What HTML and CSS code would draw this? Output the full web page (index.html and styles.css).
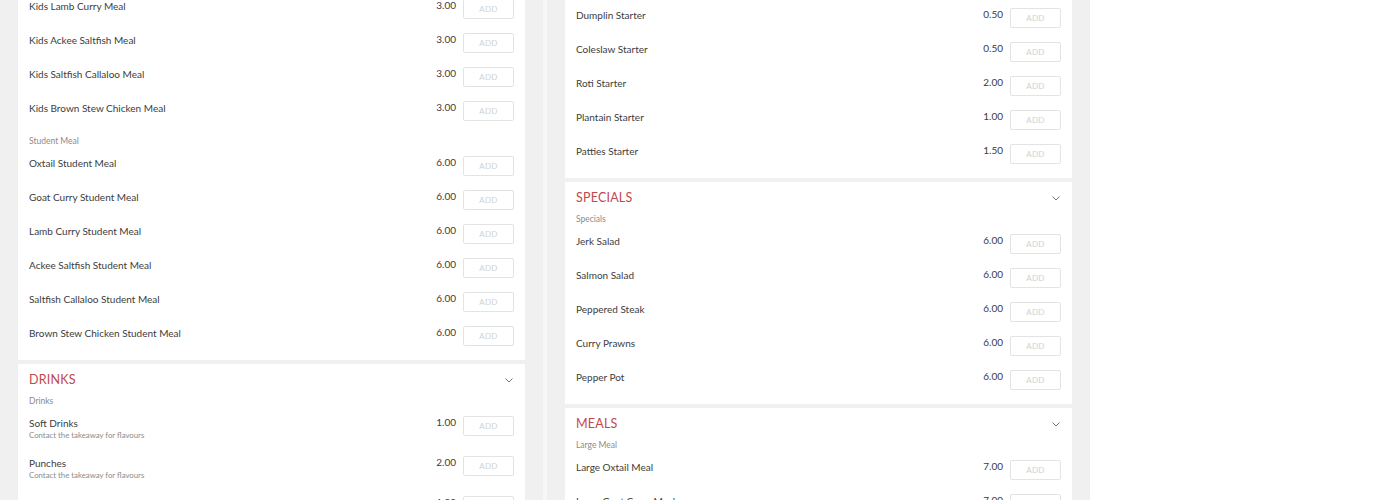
FILE: index.html
```html
<!DOCTYPE html>
<html>
<head>
<meta charset="utf-8">
<link rel="stylesheet" href="styles.css">
</head>
<body>
<div class="page">
  <div class="column col-left">
    <section class="card card-top">
      <div class="row"><div class="info"><div class="name">Kids Lamb Curry Meal</div></div><div class="price">3.00</div><button class="add">ADD</button></div>
      <div class="row"><div class="info"><div class="name">Kids Ackee Saltfish Meal</div></div><div class="price">3.00</div><button class="add">ADD</button></div>
      <div class="row"><div class="info"><div class="name">Kids Saltfish Callaloo Meal</div></div><div class="price">3.00</div><button class="add">ADD</button></div>
      <div class="row"><div class="info"><div class="name">Kids Brown Stew Chicken Meal</div></div><div class="price">3.00</div><button class="add">ADD</button></div>
      <div class="sub">Student Meal</div>
      <div class="row"><div class="info"><div class="name">Oxtail Student Meal</div></div><div class="price">6.00</div><button class="add">ADD</button></div>
      <div class="row"><div class="info"><div class="name">Goat Curry Student Meal</div></div><div class="price">6.00</div><button class="add">ADD</button></div>
      <div class="row"><div class="info"><div class="name">Lamb Curry Student Meal</div></div><div class="price">6.00</div><button class="add">ADD</button></div>
      <div class="row"><div class="info"><div class="name">Ackee Saltfish Student Meal</div></div><div class="price">6.00</div><button class="add">ADD</button></div>
      <div class="row"><div class="info"><div class="name">Saltfish Callaloo Student Meal</div></div><div class="price">6.00</div><button class="add">ADD</button></div>
      <div class="row"><div class="info"><div class="name">Brown Stew Chicken Student Meal</div></div><div class="price">6.00</div><button class="add">ADD</button></div>
    </section>
    <section class="card">
      <div class="head"><h2>DRINKS</h2><svg class="chev" viewBox="0 0 8 5" width="8" height="5"><path d="M0.5 0.5 L4 4 L7.5 0.5" fill="none" stroke="#666" stroke-width="0.9"/></svg></div>
      <div class="sub">Drinks</div>
      <div class="row row-desc"><div class="info"><div class="name">Soft Drinks</div><div class="desc">Contact the takeaway for flavours</div></div><div class="price">1.00</div><button class="add">ADD</button></div>
      <div class="row row-desc"><div class="info"><div class="name">Punches</div><div class="desc">Contact the takeaway for flavours</div></div><div class="price">2.00</div><button class="add">ADD</button></div>
      <div class="row"><div class="info"><div class="name name-indent">Tea</div></div><div class="price">1.00</div><button class="add">ADD</button></div>
    </section>
  </div>
  <div class="column col-right">
    <section class="card card-top-right">
      <div class="row"><div class="info"><div class="name">Dumplin Starter</div></div><div class="price">0.50</div><button class="add">ADD</button></div>
      <div class="row"><div class="info"><div class="name">Coleslaw Starter</div></div><div class="price">0.50</div><button class="add">ADD</button></div>
      <div class="row"><div class="info"><div class="name">Roti Starter</div></div><div class="price">2.00</div><button class="add">ADD</button></div>
      <div class="row"><div class="info"><div class="name">Plantain Starter</div></div><div class="price">1.00</div><button class="add">ADD</button></div>
      <div class="row"><div class="info"><div class="name">Patties Starter</div></div><div class="price">1.50</div><button class="add">ADD</button></div>
    </section>
    <section class="card">
      <div class="head"><h2>SPECIALS</h2><svg class="chev" viewBox="0 0 8 5" width="8" height="5"><path d="M0.5 0.5 L4 4 L7.5 0.5" fill="none" stroke="#666" stroke-width="0.9"/></svg></div>
      <div class="sub">Specials</div>
      <div class="row"><div class="info"><div class="name">Jerk Salad</div></div><div class="price">6.00</div><button class="add">ADD</button></div>
      <div class="row"><div class="info"><div class="name">Salmon Salad</div></div><div class="price">6.00</div><button class="add">ADD</button></div>
      <div class="row"><div class="info"><div class="name">Peppered Steak</div></div><div class="price">6.00</div><button class="add">ADD</button></div>
      <div class="row"><div class="info"><div class="name">Curry Prawns</div></div><div class="price">6.00</div><button class="add">ADD</button></div>
      <div class="row"><div class="info"><div class="name">Pepper Pot</div></div><div class="price">6.00</div><button class="add">ADD</button></div>
    </section>
    <section class="card">
      <div class="head"><h2>MEALS</h2><svg class="chev" viewBox="0 0 8 5" width="8" height="5"><path d="M0.5 0.5 L4 4 L7.5 0.5" fill="none" stroke="#666" stroke-width="0.9"/></svg></div>
      <div class="sub">Large Meal</div>
      <div class="row"><div class="info"><div class="name">Large Oxtail Meal</div></div><div class="price">7.00</div><button class="add">ADD</button></div>
      <div class="row"><div class="info"><div class="name">Large Goat Curry Meal</div></div><div class="price">7.00</div><button class="add">ADD</button></div>
    </section>
  </div>
  <div class="blank"></div>
</div>
</body>
</html>
```

FILE: styles.css
```css
* { box-sizing: border-box; }
html, body { margin: 0; padding: 0; background: #ffffff; }
body {
  font-family: Lato, "Open Sans", "Liberation Sans", sans-serif;
  color: #3c3c3c;
  height: 500px;
  overflow: hidden;
}
.page {
  display: flex;
  align-items: stretch;
  height: 500px;
}
.column {
  background: #f0f0f0;
  display: flex;
  flex-direction: column;
  gap: 4px;
  padding: 0 18px;
}
.col-left {
  width: 543px;
  margin-top: -2px;
}
.col-right {
  width: 547px;
  border-left: 4px solid #f7f7f7;
}
.blank { flex: 1; background: #ffffff; }
.card {
  background: #ffffff;
  padding: 0 11px;
  flex-shrink: 0;
}
.card-top { padding-top: 1px; }
.card-top-right { padding-top: 8px; }
.head {
  display: flex;
  align-items: center;
  justify-content: space-between;
  padding-top: 7px;
  height: 25px;
  margin-bottom: 6px;
}
.head h2 {
  margin: 0;
  font-size: 12.5px;
  font-weight: 400;
  letter-spacing: 0.2px;
  color: #c2484e;
  line-height: 18px;
}
.chev { margin-right: 1px; }
.sub {
  font-size: 8.5px;
  line-height: 12px;
  color: #8c8c8c;
  margin-bottom: 9px;
}
.row {
  display: flex;
  align-items: flex-start;
  padding-bottom: 14px;
}
.row-desc { padding-bottom: 15px; }
.info { flex: 1; min-width: 0; }
.name {
  font-size: 10px;
  line-height: 14px;
  color: #3c3c3c;
}
.name-indent { padding-left: 49px; }
.desc {
  font-size: 7.8px;
  line-height: 11px;
  color: #8c8c8c;
}
.price {
  font-size: 10px;
  line-height: 13px;
  color: #3c3c3c;
  margin-right: 7px;
}
.add {
  width: 51px;
  height: 20px;
  padding: 0;
  border: 1px solid #e2e4e4;
  border-radius: 2px;
  background: #ffffff;
  color: #ccd4d4;
  font-family: Lato, "Open Sans", "Liberation Sans", sans-serif;
  font-size: 8px;
  letter-spacing: 0.3px;
}
```
